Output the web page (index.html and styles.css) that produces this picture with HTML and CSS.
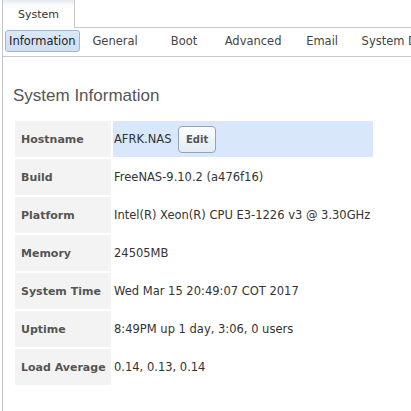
FILE: index.html
```html
<!DOCTYPE html>
<html lang="en">
<head>
  <meta charset="UTF-8" />
  <title>System Information</title>
  <link rel="stylesheet" href="styles.css">
</head>
<body>
  <div class="page">
    <!-- Top tabs -->
    <div class="tabbar">
      <div class="tab active">System</div>
      <div class="tab-fill"></div>
    </div>

    <!-- Sub navigation -->
    <div class="subnav">
      <button class="subnav-btn selected">Information</button>
      <button class="subnav-btn">General</button>
      <button class="subnav-btn">Boot</button>
      <button class="subnav-btn">Advanced</button>
      <button class="subnav-btn">Email</button>
      <button class="subnav-btn">System Dataset</button>
    </div>

    <!-- Info table -->
    <div class="content">
      <h2 class="title">System Information</h2>
      <table class="info">
        <tr class="highlight">
          <th>Hostname</th>
          <td>AFRK.NAS <button class="edit-btn">Edit</button></td>
        </tr>
        <tr>
          <th>Build</th>
          <td>FreeNAS-9.10.2 (a476f16)</td>
        </tr>
        <tr>
          <th>Platform</th>
          <td>Intel(R) Xeon(R) CPU E3-1226 v3 @ 3.30GHz</td>
        </tr>
        <tr>
          <th>Memory</th>
          <td>24505MB</td>
        </tr>
        <tr>
          <th>System Time</th>
          <td>Wed Mar 15 20:49:07 COT 2017</td>
        </tr>
        <tr>
          <th>Uptime</th>
          <td>8:49PM up 1 day, 3:06, 0 users</td>
        </tr>
        <tr>
          <th>Load Average</th>
          <td>0.14, 0.13, 0.14</td>
        </tr>
      </table>
    </div>
  </div>
</body>
</html>
```

FILE: styles.css
```css
/* Reset */
* {
  margin: 0;
  padding: 0;
  box-sizing: border-box;
}
html, body {
  height: 100%;
  overflow: hidden;
}
body {
  background: #fff;
  font-family: "DejaVu Sans", Verdana, sans-serif;
  font-size: 11px;
  color: #333;
}

.page {
  margin-left: 2px;
  min-height: 100%;
  border-left: 1px solid #c3c3c3;
}

/* Top tabs */
.tabbar {
  display: flex;
  height: 28px;
}
.tab {
  width: 72px;
  height: 28px;
  padding-top: 8px;
  text-align: center;
  color: #333;
  border-right: 1px solid #c8c8c8;
  background: linear-gradient(#e4eaf1 0, #fafbfc 5px, #fff 10px);
}
.tab-fill {
  flex: 1;
  border-bottom: 1px solid #c8c8c8;
}

/* Sub navigation */
.subnav {
  display: flex;
  padding: 2px 0 4px 2px;
  border-bottom: 1px solid #c8c8c8;
  white-space: nowrap;
  overflow: hidden;
}
.subnav-btn {
  flex: none;
  min-width: 67px;
  height: 22px;
  margin-right: 2px;
  padding: 0 3px;
  border: 1px solid transparent;
  border-radius: 3px;
  background: none;
  font-family: inherit;
  font-size: 11.5px;
  color: #444;
  text-align: center;
}
.subnav-btn.selected {
  border-color: #9fb6cf;
  background: linear-gradient(#dbe8f6, #cfe0f2);
  color: #222;
}

/* Content */
.content {
  padding-left: 10px;
}
.title {
  margin-top: 29px;
  margin-bottom: 13px;
  font-family: "Liberation Sans", Arial, sans-serif;
  font-size: 17px;
  font-weight: normal;
  line-height: 20px;
  color: #555;
}

.info {
  border-spacing: 2px;
  width: 362px;
}
.info th,
.info td {
  height: 36px;
  vertical-align: middle;
}
.info th {
  width: 96px;
  padding-left: 6px;
  background: #f3f3f3;
  color: #555;
  font-weight: bold;
  text-align: left;
  white-space: nowrap;
}
.info td {
  padding-left: 1px;
  font-size: 11.5px;
  color: #333;
  white-space: nowrap;
}
.info tr.highlight td {
  background: #d8e8fa;
}

.edit-btn {
  width: 38px;
  height: 27px;
  margin-left: 3px;
  border: 1px solid #8fa4bb;
  border-radius: 4px;
  background: linear-gradient(#fdfeff, #e3ebf4);
  font-family: inherit;
  font-size: 10px;
  font-weight: bold;
  color: #555;
  vertical-align: middle;
}
```
